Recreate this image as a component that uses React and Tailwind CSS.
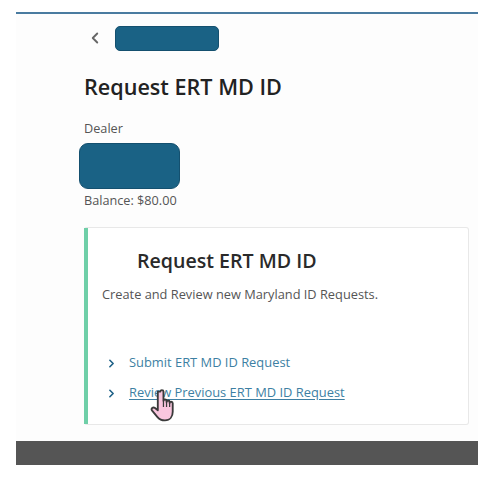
import React from 'react';
import { ChevronLeft, ChevronRight } from 'lucide-react';

function HandCursor() {
  return (
    <svg viewBox="0 0 28 34" className="absolute left-[150px] top-[388px] h-[35px] w-[30px]" aria-hidden="true">
      <path
        d="M9.500 3.500c0-2 3-2 3 0v9c0-1.800 3-1.800 3 0v1c0-1.800 3-1.800 3 0v1c0-1.600 3-1.600 3 .2v8.300c0 4.500-2.500 8.500-7.500 8.500-3.500 0-5.500-1-7.500-3.500l-5-6c-1.500-2 .8-4 2.800-2.500l2.700 2.200V3.500z"
        fill="#f9c6de"
        stroke="#3a3a3a"
        strokeWidth="1.800"
        strokeLinejoin="round"
      />
      <path d="M12.500 12.500v6M15.500 13.500v5M18.500 14.500v4" fill="none" stroke="#3a3a3a" strokeWidth="1.200" />
    </svg>
  );
}

function ActionLink({ label, underline }) {
  return (
    <div className="flex h-[30px] items-center">
      <ChevronRight className="ml-[17px] h-[13px] w-[13px] text-[#1f6288]" strokeWidth={3} />
      <a className={`ml-[11px] text-[12.900px] text-[#3d7fa3] ${underline ? 'underline underline-offset-2' : ''}`}>
        {label}
      </a>
    </div>
  );
}

export default function App() {
  return (
    <div className="relative h-[484px] w-[500px] overflow-hidden bg-white pt-[12px] pl-[16px] pr-[22px] font-['Open_Sans','Noto_Sans',sans-serif]">
      <div className="flex h-[429px] flex-col border-t-2 border-[#4a7ba0] bg-[#fdfdfd] pl-[68px] pr-[9px]">
        {/* Back row */}
        <div className="mt-[12px] flex items-center">
          <ChevronLeft className="ml-[2px] -mt-[2px] h-[18px] w-[18px] text-[#666666]" strokeWidth={2.500} />
          <div className="ml-[11px] h-[25px] w-[104px] rounded-[5px] border border-[#14506f] bg-[#1a6285]" />
        </div>

        <h1 className="mt-[22px] text-[21.600px] leading-[28px] font-semibold text-[#222222]">Request ERT MD ID</h1>

        <div className="mt-[19px] text-[12.700px] leading-[16px] text-[#555555]">Dealer</div>
        <div className="mt-[7px] -ml-[5px] h-[46px] w-[101px] rounded-[9px] border border-[#14506f] bg-[#1a6285]" />
        <div className="mt-[3px] text-[12.700px] leading-[16px] text-[#555555]">Balance: $80.00</div>

        {/* Card */}
        <div className="mt-[19px] h-[198px] rounded-[3px] border border-l-0 border-[#e8e8e8] bg-white">
          <div className="flex h-full">
            <div className="w-[4px] shrink-0 bg-[#6fcfa8]" />
            <div className="flex-1">
              <h2 className="mt-[20px] ml-[49px] text-[19.600px] leading-[26px] font-semibold text-[#2a2a2a]">Request ERT MD ID</h2>
              <p className="mt-[11px] ml-[14px] text-[12.800px] leading-[18px] text-[#555555]">Create and Review new Maryland ID Requests.</p>
              <div className="mt-[45px]">
                <ActionLink label="Submit ERT MD ID Request" />
                <ActionLink label="Review Previous ERT MD ID Request" underline />
              </div>
            </div>
          </div>
        </div>
      </div>

      {/* Footer bar */}
      <div className="h-[24px] bg-[#555555]" />
      <HandCursor />
    </div>
  );
}
